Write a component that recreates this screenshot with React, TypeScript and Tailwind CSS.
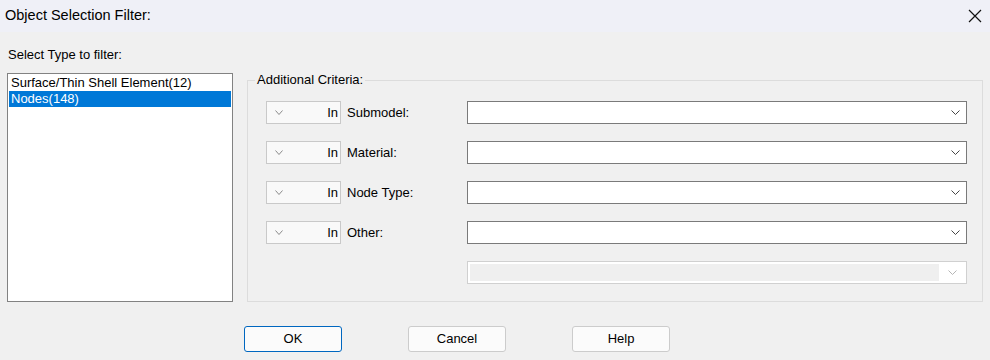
import React from "react";

const FONT = { fontFamily: '"Liberation Sans", Arial, sans-serif' };

function Chevron({ color, w = 9 }: { color: string; w?: number }) {
  return (
    <svg width={w} height={5} viewBox={`0 0 ${w} 5`} className="shrink-0">
      <polyline points={`0.5,0.5 ${w / 2},4.5 ${w - 0.5},0.5`} fill="none" stroke={color} strokeWidth={1} />
    </svg>
  );
}

function SmallCombo() {
  return (
    <div className="flex h-[23px] w-[75px] items-center justify-between border border-[#c9c9c9] bg-[#f9f9f9] pl-[8px] pr-[2px]">
      <Chevron color="#8a8a8a" w={8} />
      <span className="leading-none">In</span>
    </div>
  );
}

function BigCombo({ disabled = false }: { disabled?: boolean }) {
  if (disabled) {
    return (
      <div className="flex h-[23px] w-[500px] items-center border border-[#d0d0d0] bg-white p-[2px] pr-[9px]">
        <div className="h-full flex-1 bg-[#efefef]" />
        <div className="ml-[9px]">
          <Chevron color="#b5b5b5" />
        </div>
      </div>
    );
  }
  return (
    <div className="flex h-[23px] w-[500px] items-center justify-end border border-[#7a7a7a] bg-white pr-[6px]">
      <Chevron color="#444444" />
    </div>
  );
}

const criteria = ["Submodel:", "Material:", "Node Type:", "Other:"];

export default function App() {
  return (
    <div className="h-[360px] w-[990px] overflow-hidden bg-[#f0f0f0] text-[13px] text-black" style={FONT}>
      {/* title bar */}
      <div className="flex h-[32px] items-center justify-between bg-[#eff0f7] pl-[5px] pr-[8px]">
        <span className="text-[14.5px]">Object Selection Filter:</span>
        <svg width="14" height="14" viewBox="0 0 14 14">
          <path d="M1 1 L13 13 M13 1 L1 13" stroke="#111" strokeWidth="1.2" />
        </svg>
      </div>

      <div className="flex px-[7px] pt-[15px]">
        {/* type list */}
        <div className="flex w-[226px] flex-col">
          <div className="h-[16px] pl-[1px] leading-[16px]">Select Type to filter:</div>
          <div className="mt-[10px] h-[229px] border border-[#828282] bg-white p-[1px]">
            <div className="h-[16px] pl-[2px] leading-[16px]">Surface/Thin Shell Element(12)</div>
            <div className="h-[16px] bg-[#0078d7] pl-[2px] leading-[16px] text-white">Nodes(148)</div>
          </div>
        </div>

        {/* additional criteria */}
        <div className="relative ml-[14px] mt-[33px] h-[222px] w-[736px] border border-[#dcdcdc]">
          <span className="absolute left-[7px] top-[-9px] bg-[#f0f0f0] px-[2px] leading-[16px]">Additional Criteria:</span>
          <div className="flex flex-col gap-[17px] pl-[18px] pt-[20px]">
            {criteria.map((label) => (
              <div key={label} className="flex h-[23px] items-center">
                <SmallCombo />
                <span className="ml-[6px] w-[120px]">{label}</span>
                <BigCombo />
              </div>
            ))}
            <div className="flex h-[23px] items-center pl-[201px]">
              <BigCombo disabled />
            </div>
          </div>
        </div>
      </div>

      {/* buttons */}
      <div className="mt-[24px] flex gap-[66px] pl-[244px]">
        <button className="h-[26px] w-[98px] rounded-[3px] border border-[#0067c0] bg-[#fbfbfb]">OK</button>
        <button className="h-[26px] w-[98px] rounded-[3px] border border-[#cccccc] bg-[#fbfbfb]">Cancel</button>
        <button className="h-[26px] w-[98px] rounded-[3px] border border-[#cccccc] bg-[#fbfbfb]">Help</button>
      </div>
    </div>
  );
}
